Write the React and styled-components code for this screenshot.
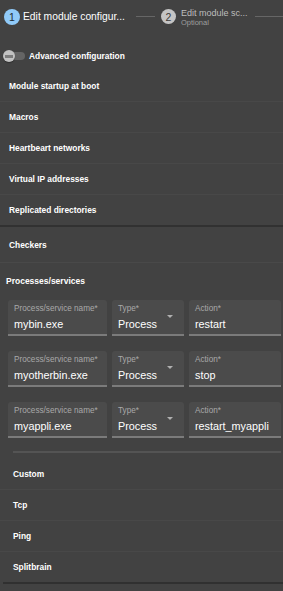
import React from "react";
import styled, { createGlobalStyle } from "styled-components";

const GlobalStyle = createGlobalStyle`
  * { box-sizing: border-box; }
  html, body {
    margin: 0;
    padding: 0;
    background: #424242;
  }
  body {
    font-family: "Liberation Sans", Arial, sans-serif;
    color: #fff;
  }
`;

const Page = styled.div`
  width: 283px;
  min-height: 591px;
  background: #424242;
  overflow: hidden;
`;

/* ---- stepper ---- */

const Stepper = styled.div`
  display: flex;
  align-items: center;
  height: 33px;
  padding-left: 4px;
`;

const Step = styled.div`
  display: flex;
  align-items: center;
  flex-shrink: 0;
  gap: ${(p) => p.$gap}px;
`;

const StepIcon = styled.span`
  width: ${(p) => p.$size}px;
  height: ${(p) => p.$size}px;
  border-radius: 50%;
  display: flex;
  align-items: center;
  justify-content: center;
  font-size: 10.5px;
  background: ${(p) => (p.$active ? "#90caf9" : "#c4c4c4")};
  color: ${(p) => (p.$active ? "#1f2a33" : "#3a3a3a")};
`;

const StepTitle = styled.span`
  font-size: 10.3px;
  color: #fff;
  white-space: nowrap;
`;

const StepText = styled.div`
  display: flex;
  flex-direction: column;
  margin-top: 2px;
`;

const StepName = styled.span`
  font-size: 9px;
  line-height: 9px;
  color: #bdbdbd;
  white-space: nowrap;
`;

const StepHint = styled.span`
  font-size: 7.5px;
  line-height: 9px;
  color: #9e9e9e;
`;

const Connector = styled.div`
  height: 1px;
  background: #666;
  flex: ${(p) => (p.$width ? "none" : "1")};
  width: ${(p) => (p.$width ? `${p.$width}px` : "auto")};
  margin-left: ${(p) => p.$left}px;
  margin-right: ${(p) => p.$right}px;
`;

/* ---- switch ---- */

const ToggleRow = styled.div`
  display: flex;
  align-items: center;
  gap: 4px;
  height: 37px;
  padding: 9px 0 0 3px;
`;

const Switch = styled.span`
  position: relative;
  width: 22px;
  height: 12px;
  flex-shrink: 0;
`;

const Track = styled.span`
  position: absolute;
  left: 3px;
  right: 0;
  top: 2px;
  height: 8px;
  border-radius: 4px;
  background: #646464;
`;

const Thumb = styled.span`
  position: absolute;
  left: 0;
  top: 0;
  width: 12px;
  height: 12px;
  border-radius: 50%;
  background: #c2c2c2;
  box-shadow: 0 1px 1px rgba(0, 0, 0, 0.3);

  &::after {
    content: "";
    position: absolute;
    left: 2px;
    right: 2px;
    top: 4.5px;
    height: 3px;
    background: #7c7c7c;
  }
`;

const ToggleLabel = styled.span`
  font-size: 8.4px;
  font-weight: bold;
  color: #fff;
`;

/* ---- accordion lists ---- */

const Item = styled.div`
  display: flex;
  align-items: center;
  height: ${(p) => p.$height || 31}px;
  padding-left: ${(p) => p.$pad}px;
  font-size: 8.4px;
  font-weight: bold;
  color: #fff;

  & + & {
    border-top: 1px solid rgba(255, 255, 255, 0.035);
  }
`;

const PanelHeader = styled(Item)`
  border-bottom: 1px solid rgba(255, 255, 255, 0.04);
`;

const Rule = styled.div`
  height: 2px;
  background: ${(p) => p.$color};
  margin: ${(p) => p.$margin || "0"};
`;

const Details = styled.div`
  padding-top: 8px;
`;

const SubHeading = styled.div`
  height: 20px;
  line-height: 20px;
  padding-left: 6px;
  font-size: 8.5px;
  font-weight: bold;
  color: #fff;
  margin-bottom: 9px;
`;

/* ---- fields ---- */

const FieldRows = styled.div`
  display: flex;
  flex-direction: column;
  gap: 15px;
`;

const FieldRow = styled.div`
  display: grid;
  grid-template-columns: 99px 72px 1fr;
  gap: 5px;
  padding: 0 2px 0 8px;
`;

const Field = styled.div`
  position: relative;
  height: 36px;
  padding: 4px 6px 0;
  background: #4b4b4b;
  border-radius: 3px 3px 0 0;
  border-bottom: 2px solid #7b7b7b;
`;

const FieldLabel = styled.div`
  font-size: 8.2px;
  line-height: 10px;
  color: #a9a9a9;
  white-space: nowrap;
`;

const FieldValue = styled.div`
  margin-top: 3px;
  font-size: 10.8px;
  line-height: 14px;
  color: #fff;
  white-space: nowrap;
`;

const Caret = styled.span`
  position: absolute;
  right: 11px;
  top: 15px;
  width: 0;
  height: 0;
  border-left: 3px solid transparent;
  border-right: 3px solid transparent;
  border-top: 3px solid #b0b0b0;
`;

const mainItems = [
  "Module startup at boot",
  "Macros",
  "Heartbeart networks",
  "Virtual IP addresses",
  "Replicated directories",
];

const processes = [
  { name: "mybin.exe", type: "Process", action: "restart" },
  { name: "myotherbin.exe", type: "Process", action: "stop" },
  { name: "myappli.exe", type: "Process", action: "restart_myappli" },
];

const checkers = ["Custom", "Tcp", "Ping", "Splitbrain"];

export default function App() {
  return (
    <Page>
      <GlobalStyle />
      <Stepper>
        <Step $gap={3}>
          <StepIcon $size={16} $active>1</StepIcon>
          <StepTitle>Edit module configur...</StepTitle>
        </Step>
        <Connector $width={19} $left={11} $right={6} />
        <Step $gap={5}>
          <StepIcon $size={15}>2</StepIcon>
          <StepText>
            <StepName>Edit module sc...</StepName>
            <StepHint>Optional</StepHint>
          </StepText>
        </Step>
        <Connector $left={8} $right={0} />
      </Stepper>

      <ToggleRow>
        <Switch>
          <Track />
          <Thumb />
        </Switch>
        <ToggleLabel>Advanced configuration</ToggleLabel>
      </ToggleRow>

      <div>
        {mainItems.map((label) => (
          <Item key={label} $pad={9}>
            {label}
          </Item>
        ))}
      </div>
      <Rule $color="#313131" />

      <PanelHeader $pad={9} $height={36}>
        Checkers
      </PanelHeader>
      <Details>
        <SubHeading>Processes/services</SubHeading>
        <FieldRows>
          {processes.map((p) => (
            <FieldRow key={p.name}>
              <Field>
                <FieldLabel>Process/service name*</FieldLabel>
                <FieldValue>{p.name}</FieldValue>
              </Field>
              <Field>
                <FieldLabel>Type*</FieldLabel>
                <FieldValue>{p.type}</FieldValue>
                <Caret />
              </Field>
              <Field>
                <FieldLabel>Action*</FieldLabel>
                <FieldValue>{p.action}</FieldValue>
              </Field>
            </FieldRow>
          ))}
        </FieldRows>
        <Rule $color="#545454" $margin="13px 2px 5px 13px" />
        {checkers.map((label) => (
          <Item key={label} $pad={13}>
            {label}
          </Item>
        ))}
      </Details>
      <Rule $color="#303030" $margin="0 0 0 3px" />
    </Page>
  );
}
